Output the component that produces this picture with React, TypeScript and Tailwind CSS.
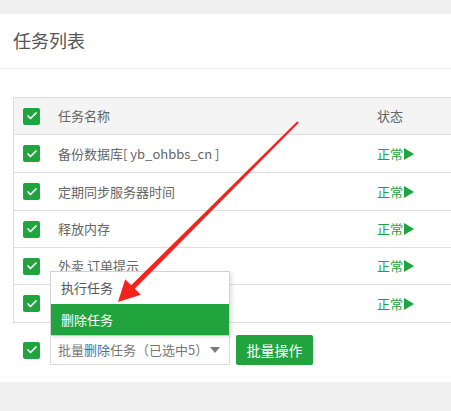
import { Check } from "lucide-react";

const rows = [
  { name: "备份数据库[ yb_ohbbs_cn ]", h: "h-[38px]" },
  { name: "定期同步服务器时间", h: "h-[38px]" },
  { name: "释放内存", h: "h-[37px]" },
  { name: "外卖 订单提示", h: "h-[37px]" },
  { name: "发送邮件", h: "h-[38px]" },
];

function GreenBox() {
  return (
    <span className="flex h-[17px] w-[17px] items-center justify-center rounded-[2px] bg-[#21a33d]">
      <Check className="h-[12px] w-[12px] text-white" strokeWidth={3.5} />
    </span>
  );
}

function Status() {
  return (
    <span className="flex items-center text-[13px] text-[#21a33d]">
      正常
      <svg width="10" height="12" viewBox="0 0 10 12" className="ml-[1px]">
        <polygon points="0,0 10,6 0,12" fill="#21a33d" />
      </svg>
    </span>
  );
}

export default function App() {
  return (
    <div
      className="relative min-h-[411px] w-[451px] overflow-hidden bg-[#f0f0f0] pt-[14px]"
      style={{ fontFamily: '"Microsoft YaHei", "Noto Sans CJK SC", sans-serif' }}
    >
      <div className="h-[368px] bg-white">
        {/* 标题 */}
        <div className="flex h-[55px] items-center border-b border-[#ececec] pl-[13px] pb-[1px] text-[18px] text-[#555]">
          任务列表
        </div>

        <div className="pl-[13px] pt-[28px]">
          {/* 表格 */}
          <div className="w-[460px] border-l border-t border-[#dedede]">
            <div className="flex h-[37px] items-center border-b border-[#dedede] bg-[#f4f4f4] text-[13px] text-[#666]">
              <div className="w-[44px] pl-[9px]">
                <GreenBox />
              </div>
              <div className="w-[319px]">任务名称</div>
              <div>状态</div>
            </div>
            {rows.map((r) => (
              <div
                key={r.name}
                className={`flex ${r.h} items-center border-b border-[#dedede] text-[13px] text-[#666]`}
              >
                <div className="w-[44px] pl-[9px]">
                  <GreenBox />
                </div>
                <div className="w-[319px] whitespace-nowrap">{r.name}</div>
                <Status />
              </div>
            ))}
          </div>

          {/* 批量操作 */}
          <div className="mt-[12px] flex items-center">
            <div className="w-[37px] pl-[10px]">
              <GreenBox />
            </div>
            <div className="relative">
              <div className="absolute bottom-full left-0 w-[180px] border border-b-0 border-[#d2d2d2] bg-white shadow-[2px_2px_4px_rgba(0,0,0,0.12)]">
                <div className="flex h-[32px] items-center pl-[10px] text-[13px] text-[#555]">执行任务</div>
                <div className="flex h-[31px] items-center bg-[#21a33d] pl-[10px] text-[13px] text-white">删除任务</div>
              </div>
              <div className="flex h-[30px] w-[180px] items-center justify-between border border-[#dcdcdc] pl-[7px] pr-[9px] text-[13px] text-[#777]">
                <span className="whitespace-nowrap">
                  批量<span className="text-[#4a6f9c]">删除</span>任务（已选中5）
                </span>
                <svg width="10" height="6" viewBox="0 0 10 6">
                  <polygon points="0,0 10,0 5,6" fill="#7a7a7a" />
                </svg>
              </div>
            </div>
            <button className="ml-[6px] h-[30px] w-[77px] rounded-[2px] bg-[#21a33d] text-[14px] text-white">
              批量操作
            </button>
          </div>
        </div>
      </div>

      {/* 红色箭头 */}
      <svg className="pointer-events-none absolute left-0 top-0" width="451" height="411">
        <polygon
          points="297.3,121.3 131.2,285.2 125.2,279.2 118,302 140.8,294.8 134.8,288.8 298.7,122.7"
          fill="#f4231c"
        />
      </svg>
    </div>
  );
}
